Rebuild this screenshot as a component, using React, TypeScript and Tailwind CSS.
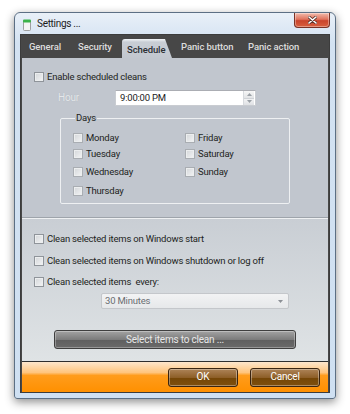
import React from 'react';

const ui = "font-['Roboto','Liberation_Sans',sans-serif]";

function Box({ dim }: { dim?: boolean }) {
    return (
        <span
            className={`w-[10px] h-[10px] shrink-0 border ${dim ? 'border-[#a9adb2]' : 'border-[#8f949a]'} bg-[linear-gradient(135deg,#d3d6d9,#f3f4f5)] shadow-[inset_0_0_0_1px_#eceeef]`}
        />
    );
}

function Check({ label, dim, className = '' }: { label: string; dim?: boolean; className?: string }) {
    return (
        <div className={`flex items-center gap-[3px] ${className}`}>
            <Box dim={dim} />
            <span className="text-[#1d1f22]">{label}</span>
        </div>
    );
}

function Tab({ label, w }: { label: string; w: string }) {
    return <span className={`${w} shrink-0 text-[9.5px] font-medium tracking-[-0.1px] text-[#dcdcdc] pb-[4px]`}>{label}</span>;
}

function Spinner() {
    return (
        <div className="flex flex-col w-[11px] h-[14px] border-l border-[#d6d9dd]">
            <div className="flex-1 flex items-center justify-center bg-[linear-gradient(#f6f6f6,#e2e4e6)] border-b border-[#cfd2d6]">
                <svg width="5" height="3" viewBox="0 0 5 3"><path d="M0 3 L2.5 0 L5 3Z" fill="#9aa0a6" /></svg>
            </div>
            <div className="flex-1 flex items-center justify-center bg-[linear-gradient(#f1f2f3,#dfe1e4)]">
                <svg width="5" height="3" viewBox="0 0 5 3"><path d="M0 0 L5 0 L2.5 3Z" fill="#9aa0a6" /></svg>
            </div>
        </div>
    );
}

export default function App() {
    return (
        <div className={`w-[350px] h-[414px] bg-white pl-[14px] pt-[12px] ${ui}`}>
            <div className="w-[322px] h-[387px] flex flex-col rounded-t-[6px] rounded-b-[3px] border border-[#5c6f84] bg-[linear-gradient(#e9f0f8,#d3e2f2_30px,#cfe0f2)] shadow-[0_3px_10px_rgba(0,0,0,0.45)]">
                {/* title bar */}
                <div className="h-[21px] flex items-center pl-[8px] pr-[5px]">
                    <svg width="8" height="12" viewBox="0 0 8 12" className="mt-[2px]">
                        <rect x="0.5" y="2" width="7" height="9.5" rx="1" fill="#f4f4f4" stroke="#8c8c8c" strokeWidth="0.8" />
                        <rect x="0" y="0.5" width="8" height="3" rx="1" fill="#3bb34a" />
                    </svg>
                    <span className="ml-[6px] text-[10px] tracking-[-0.3px] text-[#1b1b1b]">Settings ...</span>
                    <div className="ml-auto self-start w-[36px] h-[15px] rounded-b-[4px] border border-[#7a3226] border-t-0 bg-[linear-gradient(#f2bcad,#e0735d_45%,#c9442c_55%,#d9603f)] flex items-center justify-center shadow-[inset_0_0_0_1px_rgba(255,255,255,0.35)]">
                        <svg width="9" height="8" viewBox="0 0 9 8">
                            <path d="M1 1 L8 7 M8 1 L1 7" stroke="#5a3028" strokeWidth="3" strokeLinecap="round" />
                            <path d="M1 1 L8 7 M8 1 L1 7" stroke="#ffffff" strokeWidth="1.6" strokeLinecap="round" />
                        </svg>
                    </div>
                </div>

                {/* client area */}
                <div className="mx-[5px] flex-1 flex flex-col bg-[#474747] border border-[#3c3c3c]">
                    <div className="h-[23px] flex items-end pl-[8px]">
                        <Tab label="General" w="w-[49px]" />
                        <Tab label="Security" w="w-[44px]" />
                        <div className="w-[59px] shrink-0 h-[19px]">
                            <div className="relative h-[19px] w-[50px]">
                                <div className="absolute inset-0 bg-[linear-gradient(#f2f5f8,#c9ced5_3px,#c2c7cf)] [clip-path:polygon(0_0,86%_0,100%_100%,0_100%)] rounded-tl-[3px]" />
                                <span className="relative block pl-[5px] pt-[4px] text-[9.5px] font-medium tracking-[-0.1px] text-[#2b2e33]">Schedule</span>
                            </div>
                        </div>
                        <Tab label="Panic button" w="w-[67px]" />
                        <Tab label="Panic action" w="w-[60px]" />
                    </div>

                    <div className="mx-[1px] flex-1 flex flex-col text-[9.5px] tracking-[-0.2px] leading-[14px]">
                        {/* upper section */}
                        <div className="bg-[#c1c6ce] pl-[12px] pt-[12px] pb-[13px]">
                            <Check label="Enable scheduled cleans" className="h-[14px]" />
                            <div className="flex items-center mt-[6px] h-[16px]">
                                <span className="w-[81px] pl-[24px] text-[10px] text-[#e4e7ea] [text-shadow:0_0_1px_#aab0b7]">Hour</span>
                                <div className="w-[141px] h-[16px] flex items-center justify-between bg-white border border-[#c9ccd1] border-t-[#abadb3] pl-[4px] pr-[1px]">
                                    <span className="text-[#222]">9:00:00 PM</span>
                                    <Spinner />
                                </div>
                            </div>
                            <fieldset className="ml-[26px] mt-[6px] w-[230px] border border-[#eef0f2] rounded-[2px] pl-[12px] pb-[3px]">
                                <legend className="ml-[2px] px-[1px] leading-[12px] text-[#1d1f22]">Days</legend>
                                <div className="flex flex-col pt-[6px]">
                                    <div className="flex h-[16px] items-center">
                                        <Check label="Monday" dim className="w-[112px]" />
                                        <Check label="Friday" dim />
                                    </div>
                                    <div className="flex h-[16px] items-center">
                                        <Check label="Tuesday" dim className="w-[112px]" />
                                        <Check label="Saturday" dim />
                                    </div>
                                    <div className="flex h-[20px] items-center">
                                        <Check label="Wednesday" dim className="w-[112px]" />
                                        <Check label="Sunday" dim />
                                    </div>
                                    <div className="flex h-[18px] items-center">
                                        <Check label="Thursday" dim className="w-[112px]" />
                                    </div>
                                </div>
                            </fieldset>
                        </div>
                        <div className="h-px bg-[#9ea4ab]" />
                        <div className="h-px bg-[#eef0f2]" />

                        {/* lower section */}
                        <div className="flex-1 flex flex-col bg-[linear-gradient(#c9ced4,#dfe3e5)] pl-[12px] pt-[13px]">
                            <Check label="Clean selected items on Windows start" className="h-[14px]" />
                            <Check label="Clean selected items on Windows shutdown or log off" className="h-[14px] mt-[8px]" />
                            <Check label="Clean selected items  every:" className="h-[14px] mt-[7px] whitespace-pre" />
                            <div className="ml-[67px] mt-[4px] w-[188px] h-[16px] flex items-center justify-between border border-[#c4c7cb] rounded-[2px] bg-[linear-gradient(#f2f3f4,#e6e8ea)] pl-[3px] pr-[5px]">
                                <span className="text-[#6a6d71]">30 Minutes</span>
                                <svg width="5" height="3" viewBox="0 0 5 3"><path d="M0 0 L5 0 L2.5 3Z" fill="#8c9096" /></svg>
                            </div>
                            <div className="ml-[20px] mt-[21px] w-[242px] h-[19px] flex items-center justify-center rounded-[3px] border border-[#3f3f3f] bg-[linear-gradient(#a3a3a3,#7c7c7c_50%,#5e5e5e_50%,#6a6a6a)] shadow-[inset_0_0_0_1px_rgba(255,255,255,0.3)] text-[10px] text-[#e8e8e8]">
                                Select items to clean ...
                            </div>
                        </div>

                        {/* footer */}
                        <div className="h-[31px] border-t border-[#2e2e2e] flex items-center justify-end gap-[12px] pr-[8px] bg-[linear-gradient(#fde6cc,#ffc57e_35%,#ff9c1c_45%,#ff9000)]">
                            <div className="w-[70px] h-[19px] flex items-center justify-center rounded-[3px] border border-[#3a2410] bg-[linear-gradient(#ad8458,#8e5f28_50%,#744606_50%,#7e4f0e)] shadow-[inset_0_0_0_1px_rgba(255,255,255,0.35)] text-white text-[10px]">OK</div>
                            <div className="w-[70px] h-[19px] flex items-center justify-center rounded-[3px] border border-[#3a2410] bg-[linear-gradient(#ad8458,#8e5f28_50%,#744606_50%,#7e4f0e)] shadow-[inset_0_0_0_1px_rgba(255,255,255,0.35)] text-white text-[10px]">Cancel</div>
                        </div>
                    </div>
                </div>
                <div className="h-[5px]" />
            </div>
        </div>
    );
}
